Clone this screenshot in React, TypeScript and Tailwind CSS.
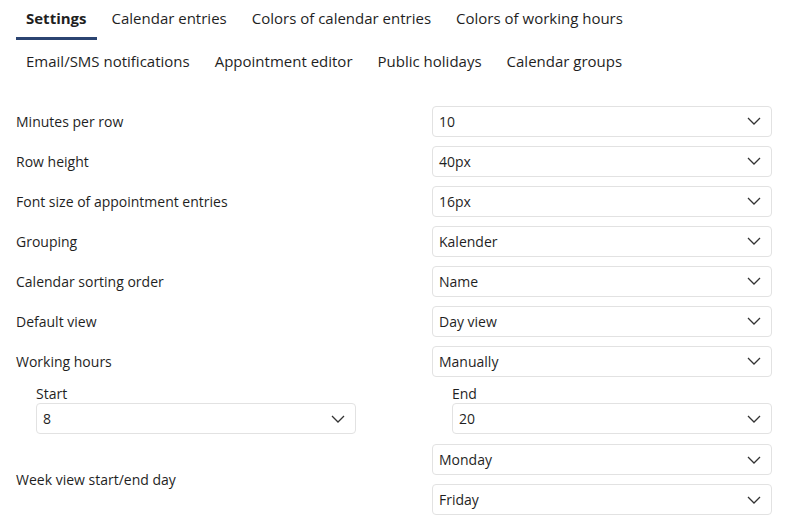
import * as React from "react";

const font = { fontFamily: '"Open Sans", "Noto Sans", sans-serif' };

function Chevron() {
  return (
    <svg width="14" height="8" viewBox="0 0 14 8" fill="none" className="shrink-0">
      <path d="M1 1l6 6 6-6" stroke="#333" strokeWidth="1.3" />
    </svg>
  );
}

function Select({ value, className = "" }: { value: string; className?: string }) {
  return (
    <div
      className={`flex h-[31px] items-center justify-between rounded-[4px] border border-[#e2e2e2] bg-white pl-[6px] pr-[10px] text-[14px] text-[#1f1f1f] ${className}`}
    >
      <span>{value}</span>
      <Chevron />
    </div>
  );
}

function Row({ label, value }: { label: string; value: string }) {
  return (
    <div className="flex h-[40px] items-center">
      <div className="w-[416px] text-[14px] text-[#1f1f1f]">{label}</div>
      <Select value={value} className="w-[340px]" />
    </div>
  );
}

const tabsTop = ["Settings", "Calendar entries", "Colors of calendar entries", "Colors of working hours"];
const tabsBottom = ["Email/SMS notifications", "Appointment editor", "Public holidays", "Calendar groups"];

export default function App() {
  return (
    <div className="h-[520px] w-[788px] overflow-hidden bg-white px-4 text-[#1f1f1f]" style={font}>
      {/* Tabs */}
      <div className="flex">
        {tabsTop.map((t, i) => (
          <div
            key={t}
            className={`px-[10px] pt-[7px] pb-[8px] text-[15px] leading-[22px] ${
              i === 0 ? "border-b-[3px] border-[#2b4471] font-bold" : "border-b-[3px] border-transparent"
            } ${i > 0 ? "ml-[5px]" : ""}`}
          >
            {t}
          </div>
        ))}
      </div>
      <div className="flex">
        {tabsBottom.map((t, i) => (
          <div key={t} className={`px-[10px] pt-[10px] text-[15px] leading-[22px] ${i > 0 ? "ml-[5px]" : ""}`}>
            {t}
          </div>
        ))}
      </div>

      {/* Form */}
      <div className="mt-[29px]">
        <Row label="Minutes per row" value="10" />
        <Row label="Row height" value="40px" />
        <Row label="Font size of appointment entries" value="16px" />
        <Row label="Grouping" value="Kalender" />
        <Row label="Calendar sorting order" value="Name" />
        <Row label="Default view" value="Day view" />
        <Row label="Working hours" value="Manually" />

        <div className="mt-[3px] flex">
          <div className="w-[416px] pl-5">
            <div className="text-[14px] leading-[19px]">Start</div>
            <Select value="8" className="w-[320px]" />
          </div>
          <div className="pl-5">
            <div className="text-[14px] leading-[19px]">End</div>
            <Select value="20" className="w-[320px]" />
          </div>
        </div>

        <div className="mt-[10px] flex items-center">
          <div className="w-[416px] text-[14px]">Week view start/end day</div>
          <div className="flex flex-col gap-[9px]">
            <Select value="Monday" className="w-[340px]" />
            <Select value="Friday" className="w-[340px]" />
          </div>
        </div>
      </div>
    </div>
  );
}
